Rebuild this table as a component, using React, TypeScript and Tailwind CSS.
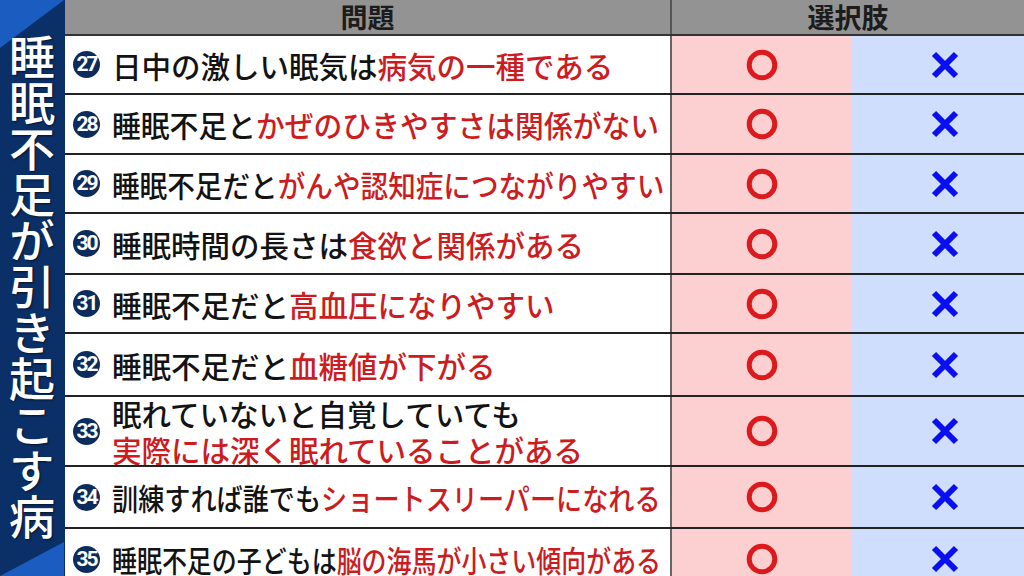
const rows: { n: number; h: string; sx: string; black: string; red: string; second?: string }[] = [
  { n: 27, h: 'h-[59px]', sx: '', black: '日中の激しい眠気は', red: '病気の一種である' },
  { n: 28, h: 'h-[60px]', sx: 'origin-left scale-x-[0.976]', black: '睡眠不足と', red: 'かぜのひきやすさは関係がない' },
  { n: 29, h: 'h-[59px]', sx: 'origin-left scale-x-[0.936]', black: '睡眠不足だと', red: 'がんや認知症につながりやすい' },
  { n: 30, h: 'h-[61px]', sx: '', black: '睡眠時間の長さは', red: '食欲と関係がある' },
  { n: 31, h: 'h-[59px]', sx: '', black: '睡眠不足だと', red: '高血圧になりやすい' },
  { n: 32, h: 'h-[63px]', sx: '', black: '睡眠不足だと', red: '血糖値が下がる' },
  { n: 33, h: 'h-[70px]', sx: '', black: '眠れていないと自覚していても', red: '', second: '実際には深く眠れていることがある' },
  { n: 34, h: 'h-[62px]', sx: 'origin-left scale-x-[0.886]', black: '訓練すれば誰でも', red: 'ショートスリーパーになれる' },
  { n: 35, h: 'h-[60px]', sx: 'origin-left scale-x-[0.846]', black: '睡眠不足の子どもは', red: '脳の海馬が小さい傾向がある' },
]

function Circle() {
  return (
    <svg width="32" height="32" viewBox="0 0 32 32">
      <circle cx="16" cy="16" r="12.8" fill="none" stroke="#dc1a1d" strokeWidth="5" />
    </svg>
  )
}

function Cross() {
  return (
    <svg width="28" height="28" viewBox="0 0 28 28">
      <path d="M3 3 L25 25 M25 3 L3 25" stroke="#0a0ff0" strokeWidth="6" strokeLinecap="butt" />
    </svg>
  )
}

export default function App() {
  return (
    <div
      className="flex h-[576px] w-[1024px] overflow-hidden bg-white"
      style={{ fontFamily: '"Noto Sans CJK JP", "Noto Sans", sans-serif' }}
    >
      {/* 縦タイトル */}
      <div className="relative flex w-[64px] shrink-0 justify-center bg-[#0b2f67] pt-[34px]">
        <svg className="absolute left-0 top-0" width="64" height="48" viewBox="0 0 64 48">
          <polygon points="0,0 64,0 0,48" fill="#1a5cc0" />
        </svg>
        <svg className="absolute bottom-0 left-0" width="64" height="34" viewBox="0 0 64 34">
          <polygon points="64,0 64,34 0,34" fill="#1a5cc0" />
        </svg>
        <span className="relative block h-[508px] text-[46px] font-medium leading-[46px] text-white [text-orientation:upright] [text-shadow:1px_1px_2px_rgba(0,0,0,0.6)] [writing-mode:vertical-rl]">
          睡眠不足が引き起こす病
        </span>
      </div>

      {/* 表 */}
      <div className="flex flex-1 flex-col border-l border-[#0b2f67]">
        <div className="flex h-[36px] shrink-0 border-b-2 border-[#333] bg-[#939393] text-[27px] font-bold leading-[34px] text-[#1c1c1c]">
          <div className="flex w-[607px] items-center justify-center border-r-2 border-[#555]">問題</div>
          <div className="flex flex-1 items-center justify-center">選択肢</div>
        </div>
        {rows.map((r) => (
          <div key={r.n} className={`flex shrink-0 border-b-2 border-[#222] ${r.h} last:border-b-0`}>
            <div className="flex w-[607px] items-center overflow-hidden border-r-2 border-[#666] pl-[8px]">
              <span className="flex h-[27px] w-[27px] shrink-0 items-center justify-center rounded-full bg-[#0c2c5e] font-['Roboto',sans-serif] text-[21px] font-bold leading-none tracking-[-2px] text-white">
                {r.n}
              </span>
              <div className="ml-[12px] flex flex-col text-[29.5px] font-medium text-[#131313]">
                {r.second ? (
                  <>
                    <span className="leading-[36px]">{r.black}</span>
                    <span className="leading-[36px] text-[#cc1c22]">{r.second}</span>
                  </>
                ) : (
                  <span className={`block whitespace-nowrap leading-[40px] ${r.sx}`}>
                    {r.black}
                    <span className="text-[#cc1c22]">{r.red}</span>
                  </span>
                )}
              </div>
            </div>
            <div className="flex w-[179px] items-center justify-center bg-[#fccfd0]">
              <Circle />
            </div>
            <div className="flex flex-1 items-center justify-center bg-[#cfdefc] pl-[14px]">
              <Cross />
            </div>
          </div>
        ))}
      </div>
    </div>
  )
}
